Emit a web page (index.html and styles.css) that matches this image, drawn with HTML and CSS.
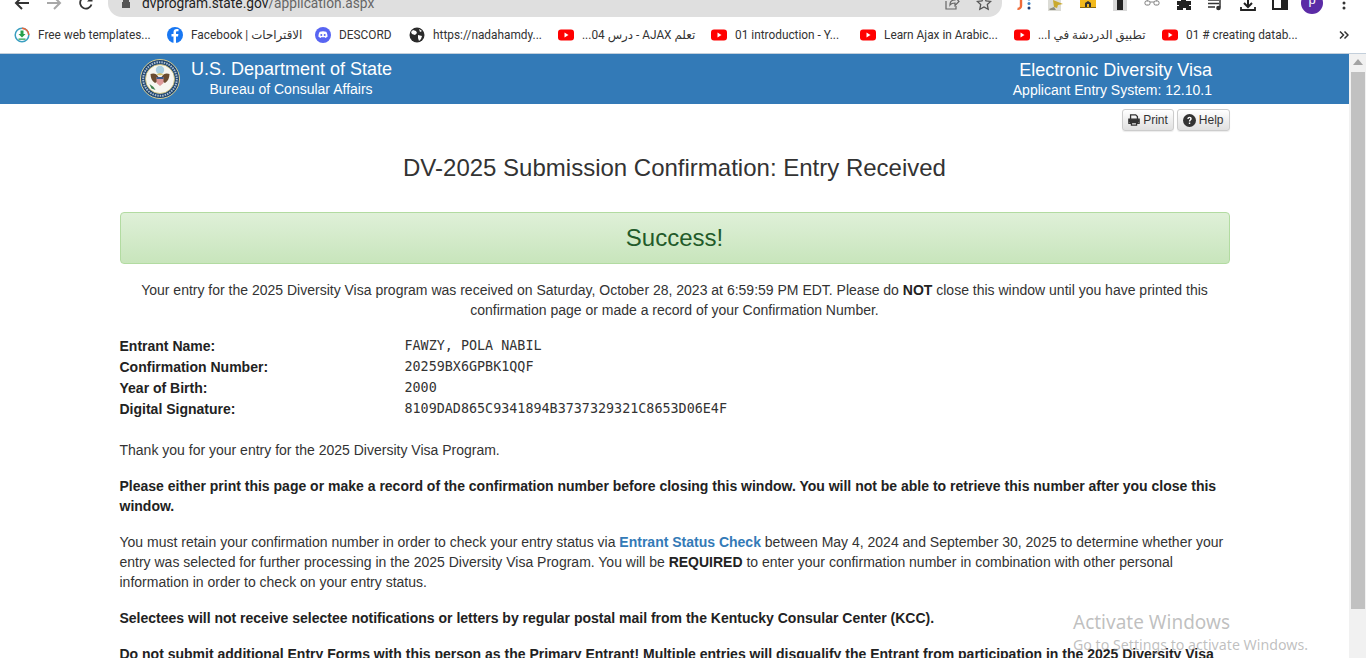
FILE: index.html
```html
<!DOCTYPE html>
<html lang="en">
<head>
  <meta charset="UTF-8">
  <title>DV-2025 Submission Confirmation</title>
  <link rel="stylesheet" href="styles.css">
</head>
<body>
  <div class="toolbar">
    <div class="tool-cell">
      <svg viewBox="0 0 16 16" width="16" height="16"><path d="M15 8H2.500M8 2L2 8l6 6" fill="none" stroke="#333" stroke-width="2"/></svg>
    </div>
    <div class="tool-cell">
      <svg viewBox="0 0 16 16" width="16" height="16"><path d="M1 8h12.500M8 2l6 6-6 6" fill="none" stroke="#a8a8a8" stroke-width="2"/></svg>
    </div>
    <div class="tool-cell">
      <svg viewBox="0 0 16 16" width="16" height="16"><path d="M13.500 9.500A5.800 5.800 0 1 1 12 3.600" fill="none" stroke="#333" stroke-width="1.800"/><path d="M14.500 1v5.500H9z" fill="#333"/></svg>
    </div>
    <div class="omnibox">
      <svg class="lock" viewBox="0 0 12 12" width="12" height="12"><path d="M3 5V3.500a3 3 0 0 1 6 0V5h1v6H2V5z" fill="#555"/></svg>
      <span class="url">dvprogram.state.gov<span class="url-path">/application.aspx</span></span>
      <svg class="omni-icon" viewBox="0 0 16 16" width="16" height="16"><path d="M2 6v8h10v-3M6 10c0-4 3-5 5-5V2l4 4.500-4 4V8c-2 0-4 .5-5 2z" fill="none" stroke="#666" stroke-width="1.200"/></svg>
      <svg class="omni-icon" viewBox="0 0 16 16" width="16" height="16"><path d="M8 1.500l2 4.300 4.700.6-3.400 3.200.9 4.700L8 11.900 3.800 14.300l.9-4.700L1.300 6.400 6 5.800z" fill="none" stroke="#555" stroke-width="1.300"/></svg>
    </div>
    <div class="tool-cell ext">
      <svg viewBox="0 0 16 16" width="16" height="16"><path d="M5 -3v9a3 3 0 0 1-3.500 2.800" fill="none" stroke="#ef6c3a" stroke-width="2.400"/><circle cx="13" cy="-1" r="1.500" fill="#4285c4"/><circle cx="13" cy="3.500" r="1.500" fill="#4285c4"/><circle cx="13" cy="8" r="1.500" fill="#1f3f77"/></svg>
    </div>
    <div class="tool-cell ext">
      <svg viewBox="0 0 16 16" width="16" height="16"><rect y="-3" width="13" height="14" fill="#dcdcd6"/><path d="M5 0l10 4-5 1-1 3-3-1z" fill="#c9a92e"/><path d="M1 9l5-2 2 3H2z" fill="#8a8a7c"/></svg>
    </div>
    <div class="tool-cell ext">
      <svg viewBox="0 0 16 16" width="16" height="16"><rect y="-3" width="16" height="11" fill="#f2b91d"/><path d="M5 8V3l3-2 3 2v5H9V4H7v4z" fill="#333"/><rect y="7" width="16" height="1" fill="#8a6a10"/></svg>
    </div>
    <div class="tool-cell ext">
      <svg viewBox="0 0 16 16" width="16" height="16"><rect x="1" y="-3" width="14" height="14" fill="#d8d8d8"/><rect x="5" y="-3" width="6" height="13" fill="#222"/></svg>
    </div>
    <div class="tool-cell ext">
      <svg viewBox="0 0 16 16" width="16" height="16"><rect x="1" y="1" width="5" height="4" rx="1.500" fill="none" stroke="#777"/><rect x="10" y="1" width="5" height="4" rx="1.500" fill="none" stroke="#777"/><path d="M6 2h4M3 1l2-4M13 1l-2-4" fill="none" stroke="#888"/></svg>
    </div>
    <div class="tool-cell ext">
      <svg viewBox="0 0 16 16" width="16" height="16"><path d="M1 1h4V-1h5v2h5v4h-2v1h2v4h-5V8H7v2H1V6h2V5H1z" fill="#222"/></svg>
    </div>
    <div class="tool-cell ext">
      <svg viewBox="0 0 16 16" width="16" height="16"><path d="M0 0h11M0 3.500h11M0 7h7" stroke="#333" stroke-width="1.400"/><path d="M12 0v7.500" stroke="#333" stroke-width="1.500"/><circle cx="10.500" cy="8" r="2.300" fill="#333"/></svg>
    </div>
    <div class="tool-cell ext">
      <svg viewBox="0 0 16 16" width="16" height="16"><path d="M8 -3v9M4 3l4 4 4-4" fill="none" stroke="#222" stroke-width="2"/><path d="M1 7v3h14V7" fill="none" stroke="#222" stroke-width="1.800"/></svg>
    </div>
    <div class="tool-cell ext">
      <svg viewBox="0 0 16 16" width="16" height="16"><path d="M1 -3h14v12H1z" fill="none" stroke="#222" stroke-width="2"/><rect x="9" y="-3" width="6" height="12" fill="#222"/></svg>
    </div>
    <div class="tool-cell">
      <span class="avatar">p</span>
    </div>
    <div class="tool-cell ext">
      <svg viewBox="0 0 16 16" width="16" height="16"><circle cx="8" cy="-2" r="1.500" fill="#333"/><circle cx="8" cy="3" r="1.500" fill="#333"/><circle cx="8" cy="8" r="1.500" fill="#333"/></svg>
    </div>
  </div>

  <div class="bookmarks">
    <div class="bookmark">
      <svg viewBox="0 0 16 16" width="16" height="16"><circle cx="8" cy="8" r="6.800" fill="#fff" stroke="#3a9fc0" stroke-width="1.500"/><path d="M8 1.200A6.800 6.800 0 0 1 14.800 8" fill="none" stroke="#e8663a" stroke-width="1.500"/><path d="M6.500 3.500h3v3.500h2L8 10.500 4.500 7h2zM4.500 11.500h7v1.200h-7z" fill="#27a04a"/></svg>
      <span>Free web templates...</span>
    </div>
    <div class="bookmark">
      <svg viewBox="0 0 16 16" width="16" height="16"><circle cx="8" cy="8" r="8" fill="#1877f2"/><path d="M9 16V9.500h2l.4-2.500H9V5.500c0-.8.3-1.300 1.400-1.300h1.100V2.100C11 2 10.300 2 9.700 2 7.800 2 6.500 3.100 6.500 5.200V7H4.500v2.500h2V16z" fill="#fff"/></svg>
      <span>Facebook | الاقتراحات</span>
    </div>
    <div class="bookmark">
      <svg viewBox="0 0 16 16" width="16" height="16"><circle cx="8" cy="8" r="8" fill="#5865f2"/><path d="M4.800 4.800c2-.9 4.400-.9 6.400 0 .9 1.400 1.400 3 1.300 5-.8.600-1.600 1-2.400 1.200l-.6-1c-1 .3-2 .3-3 0l-.6 1c-.8-.2-1.600-.6-2.400-1.200-.1-2 .4-3.600 1.300-5z" fill="#fff"/><circle cx="6.300" cy="8" r="1" fill="#5865f2"/><circle cx="9.700" cy="8" r="1" fill="#5865f2"/></svg>
      <span>DESCORD</span>
    </div>
    <div class="bookmark">
      <svg viewBox="0 0 16 16" width="16" height="16"><circle cx="8" cy="8" r="7.500" fill="#2b2b2b"/><path d="M4 3l3 1 1 2-2 2-3-1-1-2zM9 8l4 1-1 3-2 2-1-3zM10 2l3 2-2 1z" fill="#fff"/></svg>
      <span>https://nadahamdy...</span>
    </div>
    <div class="bookmark">
      <svg viewBox="0 0 16 16" width="16" height="16"><use href="#yt"/></svg>
      <span dir="rtl">تعلم AJAX - درس 04...</span>
    </div>
    <div class="bookmark">
      <svg viewBox="0 0 16 16" width="16" height="16"><use href="#yt"/></svg>
      <span>01 introduction - Y...</span>
    </div>
    <div class="bookmark">
      <svg viewBox="0 0 16 16" width="16" height="16"><use href="#yt"/></svg>
      <span>Learn Ajax in Arabic...</span>
    </div>
    <div class="bookmark">
      <svg viewBox="0 0 16 16" width="16" height="16"><use href="#yt"/></svg>
      <span dir="rtl">تطبيق الدردشة في ا...</span>
    </div>
    <div class="bookmark">
      <svg viewBox="0 0 16 16" width="16" height="16"><use href="#yt"/></svg>
      <span>01 # creating datab...</span>
    </div>
    <svg class="more" viewBox="0 0 10 10" width="10" height="10"><path d="M1 1.500L4.500 5 1 8.500M5.500 1.500L9 5 5.500 8.500" fill="none" stroke="#333" stroke-width="1.500"/></svg>
  </div>

  <svg class="defs" width="0" height="0">
    <symbol id="yt" viewBox="0 0 16 16"><rect y="2.500" width="16" height="11" rx="3" fill="#f00"/><path d="M6.500 5.500l4 2.500-4 2.500z" fill="#fff"/></symbol>
  </svg>

  <div class="viewport">
    <div class="page">
      <header class="site-header">
        <svg class="seal" viewBox="0 0 40 40" width="40" height="40">
          <circle cx="20" cy="20" r="19.500" fill="#1d4470" stroke="#d9cf94" stroke-width="1"/>
          <circle cx="20" cy="20" r="16.800" fill="none" stroke="#a9bdd0" stroke-width="2" stroke-dasharray="1.500 1"/>
          <circle cx="20" cy="20" r="14.500" fill="#f6f6f0" stroke="#c9b968" stroke-width=".8"/>
          <circle cx="20" cy="11" r="4.200" fill="#a9cfe0"/>
          <path d="M18.500 18c-2-4-5.500-4-8-3 .2 4 1.200 7 4.500 9l3.500-2zM21.500 18c2-4 5.500-4 8-3-.2 4-1.200 7-4.500 9l-3.500-2z" fill="#6a4c30"/>
          <path d="M16.500 18h7v6l-3.500 3-3.500-3z" fill="#dd9a9a"/>
          <path d="M16.500 18h7v2h-7z" fill="#3c5a8c"/>
          <path d="M9.500 25l4 3 2 3-4-1.500z" fill="#3d7f4a"/>
          <path d="M16 15.500l4-1.500 4 1.500-4 1z" fill="#d8c46a"/>
        </svg>
        <div class="agency">
          <div class="agency-name">U.S. Department of State</div>
          <div class="agency-sub">Bureau of Consular Affairs</div>
        </div>
        <div class="system">
          <div class="system-name">Electronic Diversity Visa</div>
          <div class="system-sub">Applicant Entry System: 12.10.1</div>
        </div>
      </header>

      <main class="container">
        <div class="actions">
          <button class="btn">
            <svg viewBox="0 0 14 14" width="12" height="12"><path d="M3 6V1h6l2 2v3M1 6h12v5h-2V9H3v2H1zM4 10h6v3H4z" fill="none" stroke="#333" stroke-width="1.500"/><rect x="1" y="6" width="12" height="3.500" fill="#333"/></svg>
            Print
          </button>
          <button class="btn">
            <svg viewBox="0 0 14 14" width="13" height="13"><circle cx="7" cy="7" r="7" fill="#333"/><path d="M4.700 5.300c0-1.500 1-2.300 2.400-2.300s2.300.9 2.300 2c0 1.800-1.700 1.700-1.700 3.200H6.300c0-2.200 1.500-2.100 1.500-3.100 0-.5-.3-.8-.8-.8-.6 0-.9.400-.9 1zM6.300 9.200h1.500v1.600H6.300z" fill="#fff"/></svg>
            Help
          </button>
        </div>

        <h1 class="page-title">DV-2025 Submission Confirmation: Entry Received</h1>

        <div class="alert-success">Success!</div>

        <p class="received">Your entry for the 2025 Diversity Visa program was received on Saturday, October 28, 2023 at 6:59:59 PM EDT. Please do <strong>NOT</strong> close this window until you have printed this confirmation page or made a record of your Confirmation Number.</p>

        <div class="entry-table">
          <div class="entry-label">Entrant Name:</div><div class="entry-value">FAWZY, POLA NABIL</div>
          <div class="entry-label">Confirmation Number:</div><div class="entry-value">20259BX6GPBK1QQF</div>
          <div class="entry-label">Year of Birth:</div><div class="entry-value">2000</div>
          <div class="entry-label">Digital Signature:</div><div class="entry-value">8109DAD865C9341894B3737329321C8653D06E4F</div>
        </div>

        <p>Thank you for your entry for the 2025 Diversity Visa Program.</p>
        <p><strong>Please either print this page or make a record of the confirmation number before closing this window. You will not be able to retrieve this number after you close this window.</strong></p>
        <p>You must retain your confirmation number in order to check your entry status via <a href="#">Entrant Status Check</a> between May 4, 2024 and September 30, 2025 to determine whether your entry was selected for further processing in the 2025 Diversity Visa Program. You will be <strong>REQUIRED</strong> to enter your confirmation number in combination with other personal information in order to check on your entry status.</p>
        <p><strong>Selectees will not receive selectee notifications or letters by regular postal mail from the Kentucky Consular Center (KCC).</strong></p>
        <p><strong>Do not submit additional Entry Forms with this person as the Primary Entrant! Multiple entries will disqualify the Entrant from participation in the 2025 Diversity Visa Program.</strong></p>
      </main>
    </div>

    <div class="scrollbar">
      <svg class="scroll-up" viewBox="0 0 10 6" width="10" height="6"><path d="M5 0l5 6H0z" fill="#a3a3a3"/></svg>
      <div class="scroll-thumb"></div>
    </div>
  </div>

  <div class="watermark">
    <div class="watermark-title">Activate Windows</div>
    <div class="watermark-sub">Go to Settings to activate Windows.</div>
  </div>
</body>
</html>
```

FILE: styles.css
```css
html, body {
  height: 100%;
}
body {
  margin: 0;
  overflow: hidden;
  font-family: "Liberation Sans", Arial, sans-serif;
  font-size: 14px;
  line-height: 20px;
  color: #333;
  background: #fff;
}

/* browser chrome */
.toolbar {
  height: 17px;
  padding: 0 6px;
  display: flex;
  align-items: flex-end;
  overflow: hidden;
  background: #fff;
}
.tool-cell {
  flex: none;
  width: 32px;
  height: 28px;
  display: flex;
  align-items: center;
  justify-content: center;
  overflow: visible;
}
.tool-cell svg {
  overflow: visible;
}
.ext svg {
  margin-top: 10px;
}
.omnibox {
  flex: 1;
  height: 28px;
  margin: 0 6px;
  padding: 0 10px 0 12px;
  display: flex;
  align-items: center;
  background: #dfdfdf;
  border-radius: 0 0 14px 14px;
  font-family: Roboto, "DejaVu Sans", sans-serif;
}
.lock {
  margin-right: 10px;
}
.url {
  flex: 1;
  font-size: 13.75px;
  color: #222;
}
.url-path {
  color: #666;
}
.omni-icon {
  margin-left: 16px;
}
.avatar {
  width: 22px;
  height: 22px;
  flex: none;
  border-radius: 50%;
  background: #5b2ba6;
  color: #fff;
  font-size: 13px;
  line-height: 16px;
  text-align: center;
}
.bookmarks {
  position: relative;
  height: 36px;
  padding-left: 14px;
  display: grid;
  grid-template-columns: 153px 148px 94px 149px 153px 149px 154px 148px 1fr;
  align-items: center;
  border-bottom: 1px solid #c3cfdb;
  font-family: Roboto, "DejaVu Sans", sans-serif;
  font-size: 11.85px;
  color: #333;
}
.bookmark {
  display: flex;
  align-items: center;
  gap: 8px;
  white-space: nowrap;
}
.bookmark svg {
  flex: none;
}
.more {
  position: absolute;
  right: 17px;
  top: 13px;
}
.defs {
  position: absolute;
}

/* page */
.viewport {
  display: flex;
  height: 604px;
}
.page {
  flex: 1;
  min-width: 0;
  overflow: hidden;
}
.scrollbar {
  flex: none;
  width: 17px;
  padding-top: 5px;
  background: #f1f1f1;
  display: flex;
  flex-direction: column;
  align-items: center;
}
.scroll-up {
  margin-bottom: 7px;
}
.scroll-thumb {
  width: 14px;
  height: 537px;
  margin-left: 1px;
  background: #c1c1c1;
}
.site-header {
  height: 50px;
  padding: 0 137px 0 140px;
  display: flex;
  align-items: center;
  background: #337ab7;
  color: #fff;
}
.seal {
  flex: none;
  margin-right: 11px;
}
.agency {
  flex: 1;
}
.agency-name {
  font-size: 18px;
  line-height: 20px;
}
.agency-sub {
  width: 200px;
  text-align: center;
  line-height: 20px;
}
.system {
  padding-top: 2px;
  text-align: right;
}
.system-name {
  font-size: 18px;
  line-height: 20px;
}
.system-sub {
  line-height: 20px;
}
.container {
  padding: 0 119.5px;
}
.actions {
  padding-top: 5px;
  display: flex;
  justify-content: flex-end;
  gap: 3px;
}
.btn {
  height: 22px;
  padding: 0 5px;
  display: flex;
  align-items: center;
  gap: 3px;
  font-family: inherit;
  font-size: 12px;
  color: #333;
  background: linear-gradient(#fff, #e0e0e0);
  border: 1px solid #ccc;
  border-radius: 3px;
  box-shadow: 0 1px 1px rgba(0,0,0,0.08);
}
.page-title {
  margin: 23px 0 30px;
  font-size: 24px;
  font-weight: normal;
  line-height: 28px;
  text-align: center;
}
.alert-success {
  height: 50px;
  margin-bottom: 16px;
  display: flex;
  align-items: center;
  justify-content: center;
  font-size: 24px;
  color: #225a2a;
  background: linear-gradient(#dff0d8, #c8e5bc);
  border: 1px solid #b2dba1;
  border-radius: 4px;
}
p {
  margin: 0 0 16px;
}
strong {
  color: #222;
}
a {
  font-weight: bold;
  color: #337ab7;
  text-decoration: none;
}
.received {
  margin-bottom: 15px;
  padding: 0 20px;
  text-align: center;
}
.entry-table {
  margin-bottom: 21px;
  display: grid;
  grid-template-columns: 285px 1fr;
  grid-auto-rows: 21px;
  align-items: center;
}
.entry-label {
  font-weight: bold;
  color: #222;
}
.entry-value {
  font-family: "DejaVu Sans Mono", monospace;
  font-size: 13.4px;
}

/* windows activation notice sits over the page */
.watermark {
  position: absolute;
  left: 1073px;
  top: 609px;
  font-family: "Noto Sans", "DejaVu Sans", sans-serif;
  color: rgba(150, 150, 150, 0.6);
  pointer-events: none;
}
.watermark-title {
  font-size: 19px;
  line-height: 26px;
}
.watermark-sub {
  font-size: 14.2px;
  line-height: 20px;
}
```
